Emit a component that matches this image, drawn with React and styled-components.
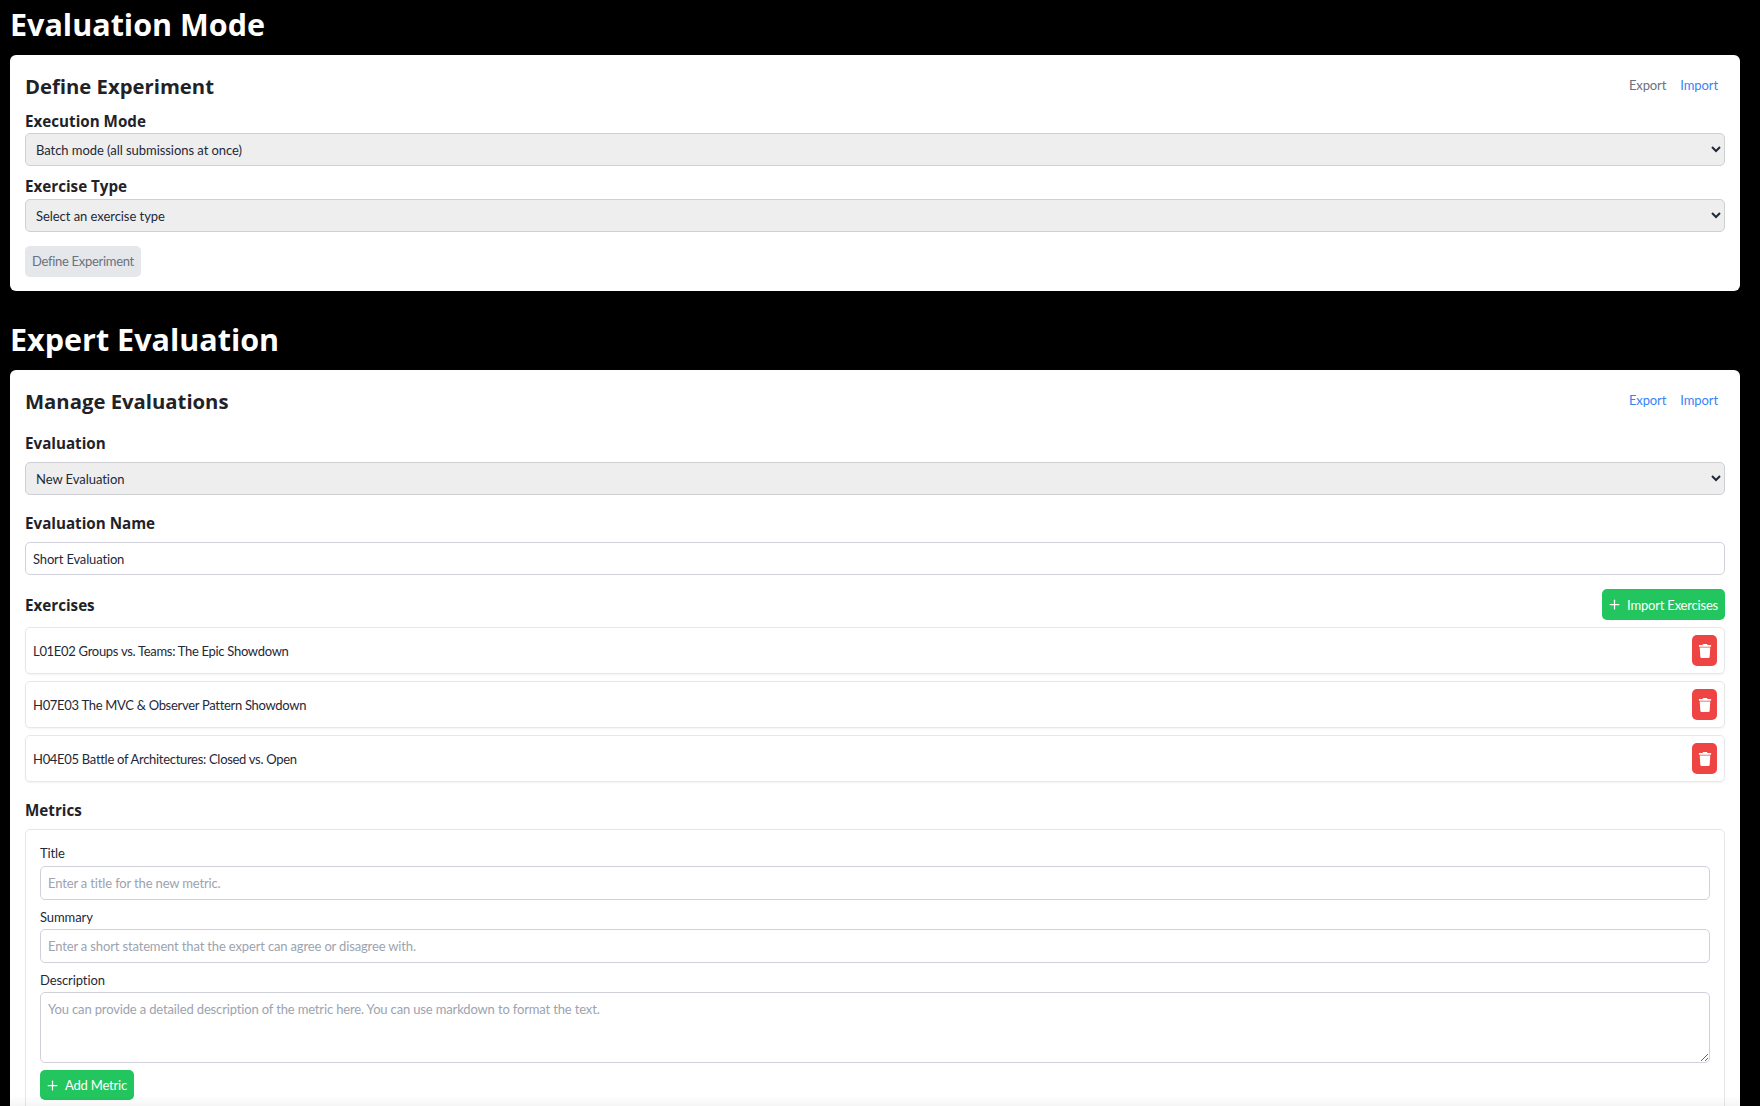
import React from 'react'
import styled, { createGlobalStyle } from 'styled-components'
import { Plus } from 'lucide-react'
import { FaTrash } from 'react-icons/fa'

const GlobalStyle = createGlobalStyle`
  html, body {
    margin: 0;
    height: 100%;
    overflow: hidden;
    background: #000;
  }
  * {
    box-sizing: border-box;
  }
  body {
    font-family: Lato, "Open Sans", sans-serif;
    color: #1f2937;
  }
`

const Page = styled.div`
  padding: 0 20px 0 10px;
  height: 1106px;
  overflow: hidden;
`

const Heading = styled.h1`
  margin: 0;
  height: 55px;
  padding-top: 2px;
  font-family: "Open Sans", sans-serif;
  font-size: 30.5px;
  line-height: 44px;
  font-weight: 700;
  color: #fff;
`

const Card = styled.section`
  display: flex;
  flex-direction: column;
  background: #fff;
  border-radius: 6px;
  padding: 14px 15px;
  margin-bottom: 24px;
`

const CardHeader = styled.div`
  display: flex;
  align-items: center;
  justify-content: space-between;
  height: 34px;
  margin-bottom: 5px;
  padding-right: 7px;
`

const CardTitle = styled.h2`
  margin: 0;
  font-family: "Open Sans", sans-serif;
  font-size: 20.3px;
  font-weight: 700;
  color: #1f2328;
`

const HeaderLinks = styled.div`
  display: flex;
  gap: 14px;
  margin-top: -2px;
`

const HeaderLink = styled.a`
  font-size: 13px;
  letter-spacing: -0.1px;
  color: ${props => (props.$muted ? '#6b7280' : '#3b82f6')};
`

const Label = styled.div`
  font-family: "Open Sans", sans-serif;
  font-size: 15.2px;
  font-weight: 700;
  line-height: 22px;
  color: #1f2328;
  margin-top: ${props => props.$top || 0}px;
  margin-bottom: ${props => props.$bottom || 0}px;
`

const Select = styled.select`
  display: block;
  width: 100%;
  height: 33px;
  padding: 0 6px;
  background-color: #eeeeee;
  border: 1px solid #ced0d4;
  border-radius: 5px;
  font-family: inherit;
  font-size: 13px;
  letter-spacing: -0.05px;
  color: #1f2937;
`

const TextInput = styled.input`
  display: block;
  width: 100%;
  height: 33px;
  padding: 0 7px;
  background: #fff;
  border: 1px solid #d1d1db;
  border-radius: 5px;
  font-family: inherit;
  font-size: 13px;
  letter-spacing: -0.15px;
  color: #1f2937;
  &::placeholder {
    color: #9ca3af;
  }
`

const MetricInput = styled(TextInput)`
  height: 34px;
`

const TextArea = styled.textarea`
  display: block;
  width: 100%;
  height: 71px;
  padding: 8px 7px;
  background: #fff;
  border: 1px solid #d1d1db;
  border-radius: 5px;
  font-family: inherit;
  font-size: 13px;
  letter-spacing: -0.15px;
  &::placeholder {
    color: #9ca3af;
  }
`

const DisabledButton = styled.button`
  align-self: flex-start;
  margin-top: 14px;
  height: 31px;
  padding: 0 7px 2px;
  background: #e5e7eb;
  border: none;
  border-radius: 5px;
  font-family: inherit;
  font-size: 13px;
  letter-spacing: -0.3px;
  color: #6b7280;
`

const GreenButton = styled.button`
  display: flex;
  align-items: center;
  gap: 5px;
  height: ${props => props.$height || 31}px;
  margin-top: ${props => props.$top || 0}px;
  padding: 0 7px 0 5px;
  background: #22c55e;
  border: none;
  border-radius: 5px;
  font-family: inherit;
  font-size: 13px;
  letter-spacing: -0.2px;
  color: #fff;
`

const SectionRow = styled.div`
  display: flex;
  align-items: center;
  justify-content: space-between;
  margin-top: 14px;
  height: 31px;
`

const ExerciseList = styled.div`
  display: flex;
  flex-direction: column;
  gap: 7px;
  margin-top: 7px;
`

const ExerciseRow = styled.div`
  display: flex;
  align-items: center;
  justify-content: space-between;
  height: 47px;
  padding: 0 7px;
  border: 1px solid #e5e7eb;
  border-radius: 5px;
  box-shadow: 0 1px 2px rgba(0, 0, 0, 0.05);
  font-size: 13px;
  letter-spacing: -0.3px;
`

const TrashButton = styled.button`
  display: flex;
  align-items: center;
  justify-content: center;
  width: 25px;
  height: 31px;
  padding: 0;
  background: #ef4444;
  border: none;
  border-radius: 5px;
  color: #fff;
`

const MetricsBox = styled.div`
  border: 1px solid #e5e7eb;
  border-radius: 5px;
  padding: 13px 14px 14px;
  margin-top: 4px;
`

const FieldLabel = styled.div`
  font-size: 13px;
  letter-spacing: -0.1px;
  line-height: 20px;
  margin-top: ${props => props.$top || 0}px;
  margin-bottom: ${props => props.$bottom || 2}px;
`

const Fade = styled.div`
  position: fixed;
  left: 10px;
  width: 1730px;
  bottom: 0;
  height: 11px;
  background: linear-gradient(rgba(0, 0, 0, 0), rgba(0, 0, 0, 0.035));
`

const exercises = [
  'L01E02 Groups vs. Teams: The Epic Showdown',
  'H07E03 The MVC & Observer Pattern Showdown',
  'H04E05 Battle of Architectures: Closed vs. Open',
]

const App = () => {
  return (
    <Page>
      <GlobalStyle />
      <Heading>Evaluation Mode</Heading>
      <Card>
        <CardHeader>
          <CardTitle>Define Experiment</CardTitle>
          <HeaderLinks>
            <HeaderLink $muted>Export</HeaderLink>
            <HeaderLink>Import</HeaderLink>
          </HeaderLinks>
        </CardHeader>
        <Label $top={2} $bottom={1}>Execution Mode</Label>
        <Select defaultValue="batch">
          <option value="batch">Batch mode (all submissions at once)</option>
        </Select>
        <Label $top={9} $bottom={2}>Exercise Type</Label>
        <Select defaultValue="">
          <option value="">Select an exercise type</option>
        </Select>
        <DisabledButton disabled>Define Experiment</DisabledButton>
      </Card>
      <Heading>Expert Evaluation</Heading>
      <Card>
        <CardHeader>
          <CardTitle>Manage Evaluations</CardTitle>
          <HeaderLinks>
            <HeaderLink>Export</HeaderLink>
            <HeaderLink>Import</HeaderLink>
          </HeaderLinks>
        </CardHeader>
        <Label $top={9} $bottom={8}>Evaluation</Label>
        <Select defaultValue="new">
          <option value="new">New Evaluation</option>
        </Select>
        <Label $top={17} $bottom={8}>Evaluation Name</Label>
        <TextInput defaultValue="Short Evaluation" />
        <SectionRow>
          <Label>Exercises</Label>
          <GreenButton>
            <Plus size={15} strokeWidth={2} />
            Import Exercises
          </GreenButton>
        </SectionRow>
        <ExerciseList>
          {exercises.map(name => (
            <ExerciseRow key={name}>
              {name}
              <TrashButton><FaTrash size={14} /></TrashButton>
            </ExerciseRow>
          ))}
        </ExerciseList>
        <Label $top={17} $bottom={4}>Metrics</Label>
        <MetricsBox>
          <FieldLabel $bottom={3}>Title</FieldLabel>
          <MetricInput placeholder="Enter a title for the new metric." />
          <FieldLabel $top={7}>Summary</FieldLabel>
          <MetricInput placeholder="Enter a short statement that the expert can agree or disagree with." />
          <FieldLabel $top={7}>Description</FieldLabel>
          <TextArea placeholder="You can provide a detailed description of the metric here. You can use markdown to format the text." />
          <GreenButton $height={30} $top={7}>
            <Plus size={15} strokeWidth={2} />
            Add Metric
          </GreenButton>
        </MetricsBox>
      </Card>
      <Fade />
    </Page>
  )
}

export default App
